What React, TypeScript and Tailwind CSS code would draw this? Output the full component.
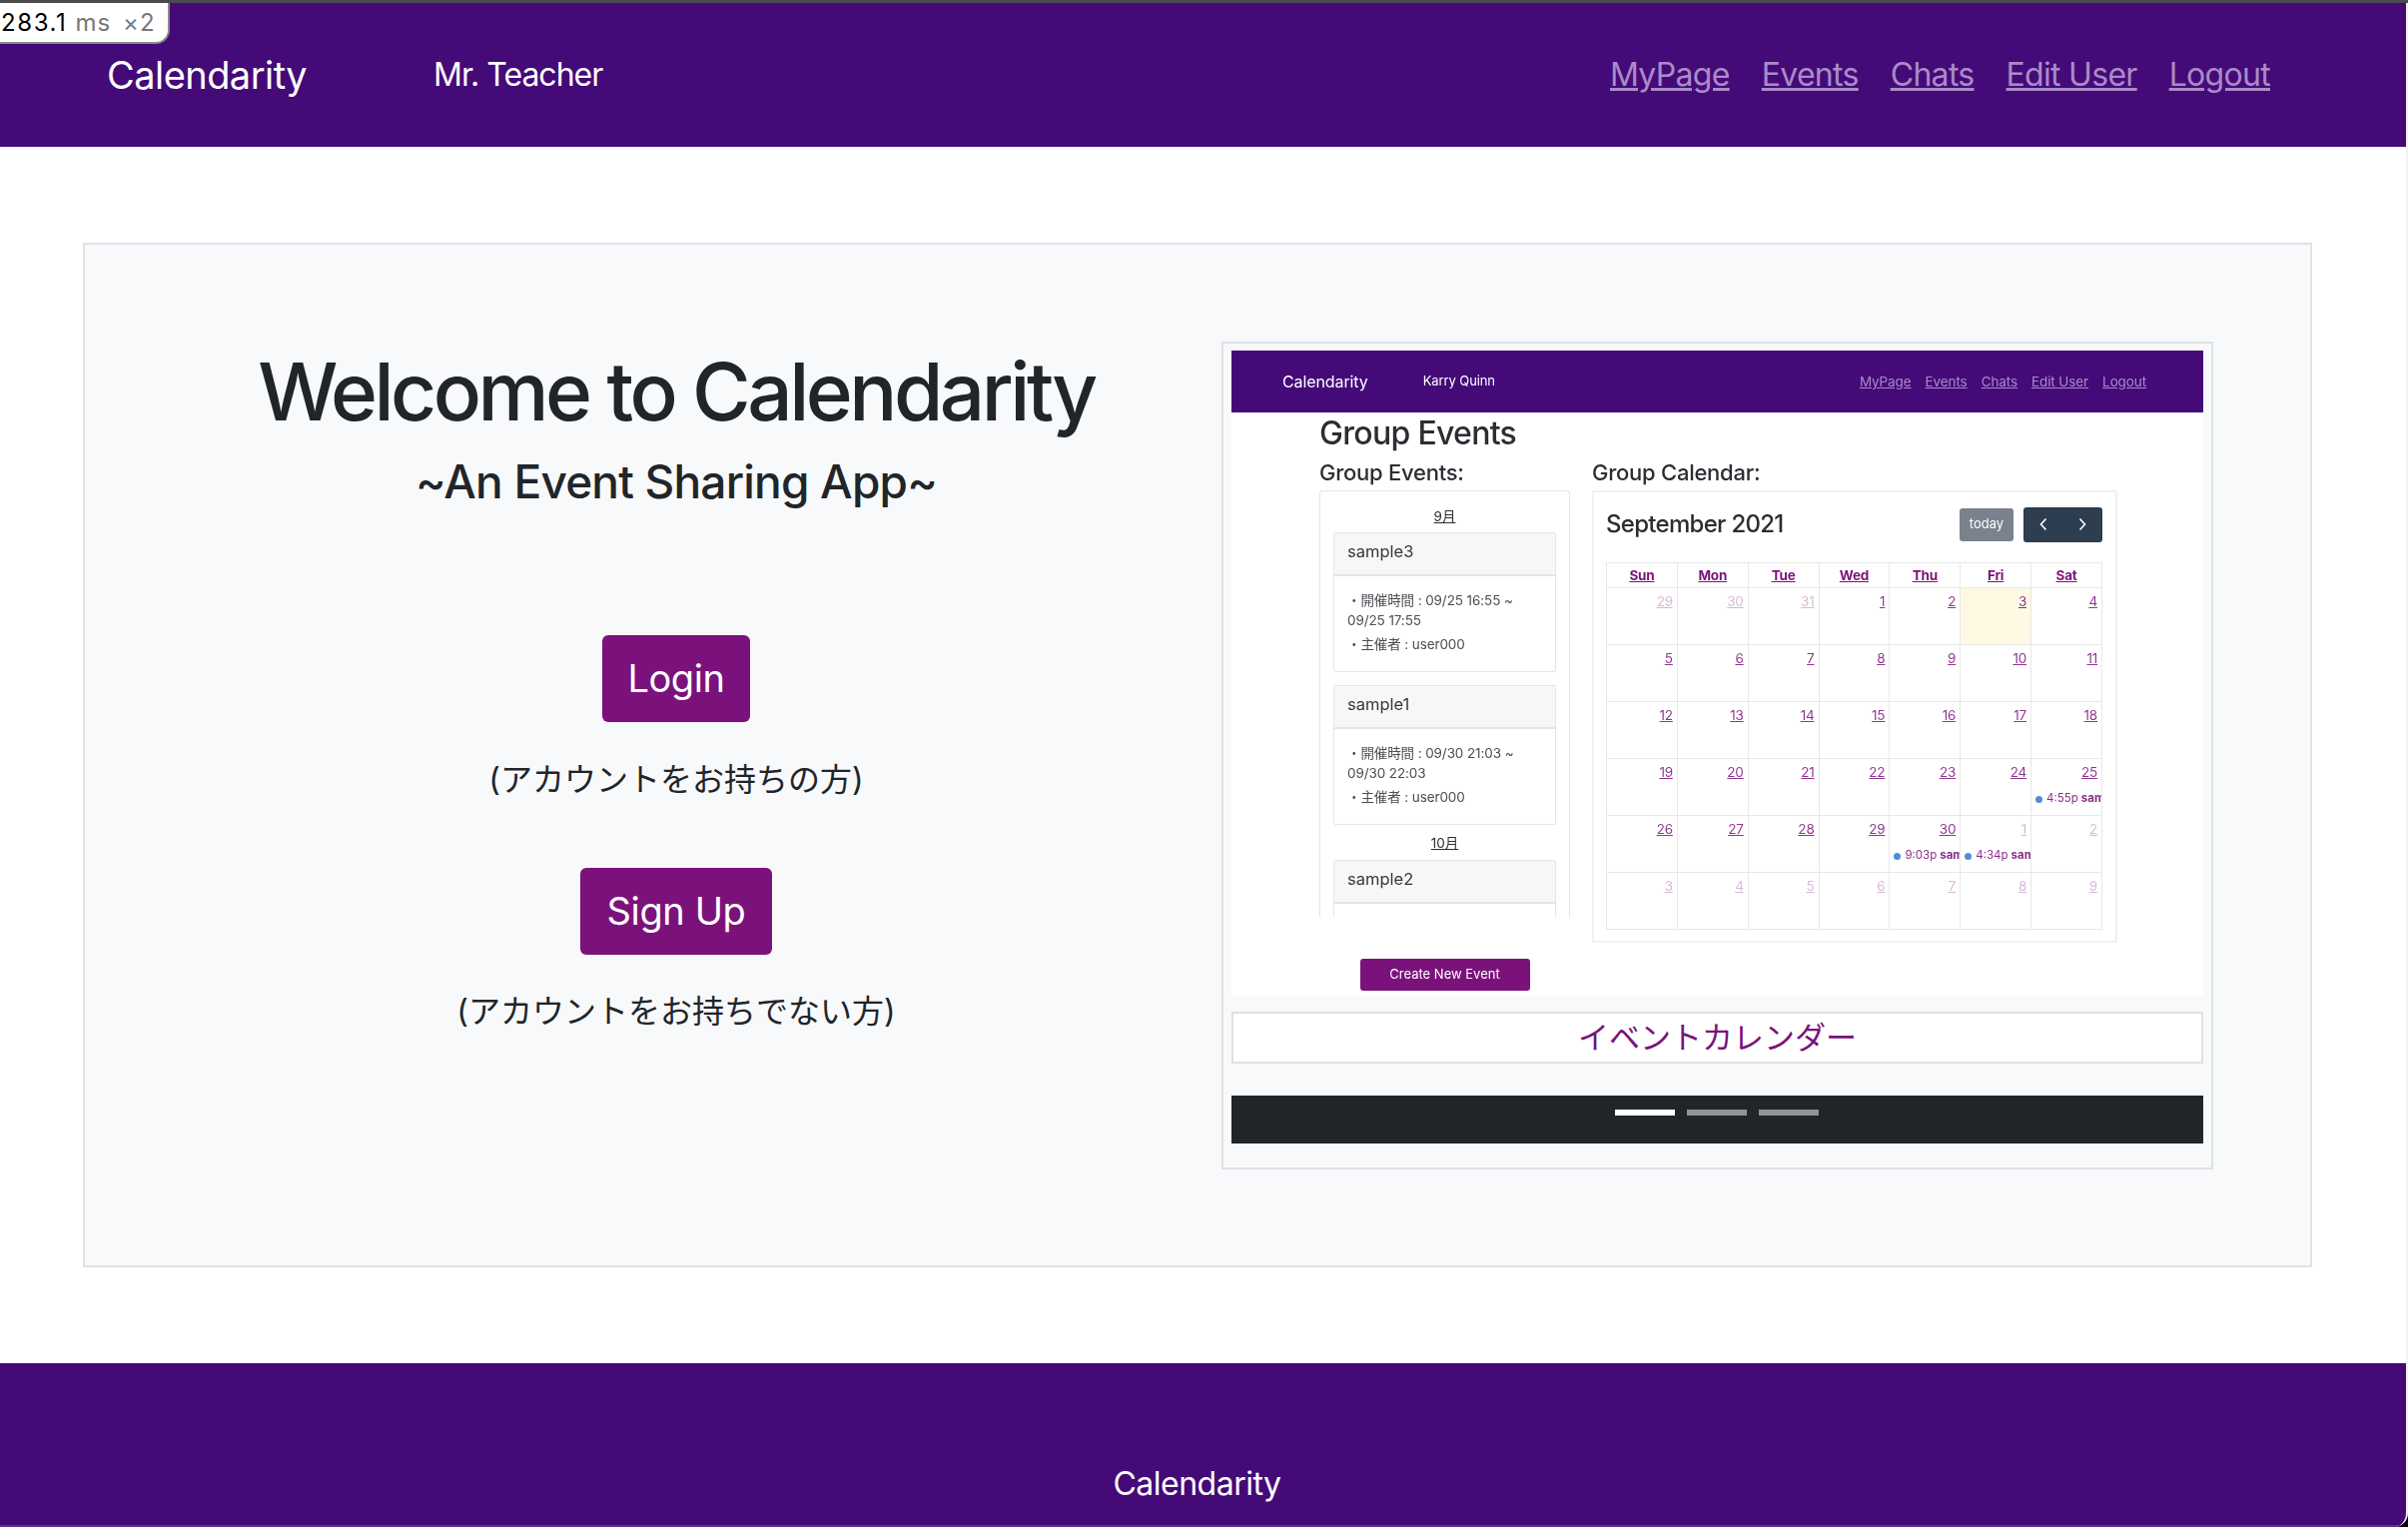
const days = [
  [29, 30, 31, 1, 2, 3, 4],
  [5, 6, 7, 8, 9, 10, 11],
  [12, 13, 14, 15, 16, 17, 18],
  [19, 20, 21, 22, 23, 24, 25],
  [26, 27, 28, 29, 30, 1, 2],
  [3, 4, 5, 6, 7, 8, 9],
];

const weekdays = ['Sun', 'Mon', 'Tue', 'Wed', 'Thu', 'Fri', 'Sat'];

const eventsByCell: Record<string, string> = {
  '3-6': '4:55p',
  '4-4': '9:03p',
  '4-5': '4:34p',
};

function isOtherMonth(row: number, value: number) {
  return (row === 0 && value > 20) || (row >= 4 && value < 20);
}

function EventCard({ title, lines, organizer }: { title: string; lines: string[]; organizer: string }) {
  return (
    <div className="border border-[#e3e5e8] rounded-[2px]">
      <div className="h-[43px] bg-[#f7f7f7] border-b-2 border-[#e3e5e8] pl-[13px] pt-[6px] text-[16.5px] leading-[24px] text-[#33373a]">
        {title}
      </div>
      <div className="pl-[13px] pt-[14px] pb-[17px] text-[13.5px] tracking-[-0.1px] text-[#4a4e52]">
        {lines.map((line) => (
          <div key={line} className="leading-[20px]">{line}</div>
        ))}
        <div className="leading-[20px] mt-[4px]">{organizer}</div>
      </div>
    </div>
  );
}

function Calendar() {
  return (
    <table className="w-[497px] table-fixed border-collapse">
      <thead>
        <tr className="h-[25px]">
          {weekdays.map((day) => (
            <th key={day} className="border border-[#e8e8e8] p-0 text-[13.5px] font-bold tracking-[-0.2px] text-[#7b127b] underline">
              {day}
            </th>
          ))}
        </tr>
      </thead>
      <tbody>
        {days.map((week, row) => (
          <tr key={row} className="h-[57px]">
            {week.map((value, col) => {
              const event = eventsByCell[`${row}-${col}`];
              return (
                <td
                  key={col}
                  className={`border border-[#e8e8e8] p-0 align-top ${row === 0 && col === 5 ? 'bg-[#fdf9e3]' : ''}`}
                >
                  <div className={`text-right pr-[4px] pt-[3px] text-[13.5px] leading-[20px] tracking-[-0.2px] text-[#7b127b] underline ${isOtherMonth(row, value) ? 'opacity-30' : 'opacity-85'}`}>
                    {value}
                  </div>
                  {event && (
                    <div className="flex items-center h-[16px] mt-[9px] pl-[4px] pr-[2px] overflow-hidden whitespace-nowrap text-[11.5px] text-[#7b127b] opacity-90">
                      <span className="w-[7px] h-[7px] rounded-full bg-[#3f80d8] mr-[4px] shrink-0" />
                      <span className="mr-[3px]">{event}</span>
                      <span className="font-bold">sample</span>
                    </div>
                  )}
                </td>
              );
            })}
          </tr>
        ))}
      </tbody>
    </table>
  );
}

function EventScreenshot() {
  return (
    <div className="h-[646px] bg-white blur-[0.4px] overflow-hidden">
      <div className="h-[62px] bg-[#440a78] flex items-center pl-[51px] pr-[57px] text-white">
        <span className="text-[16px] tracking-[-0.1px]">Calendarity</span>
        <span className="text-[13px] ml-[55px] tracking-[-0.1px]">Karry Quinn</span>
        <div className="ml-auto flex gap-[14px] text-[13.5px] tracking-[-0.1px] text-[#a98bc8] underline">
          <span>MyPage</span>
          <span>Events</span>
          <span>Chats</span>
          <span>Edit User</span>
          <span>Logout</span>
        </div>
      </div>
      <div className="pl-[88px] text-[#2a2e32]">
        <h2 className="text-[32px] leading-[42px] font-medium tracking-[-0.7px]">Group Events</h2>
        <div className="flex gap-[22px] mt-[3px]">
          <div className="w-[251px]">
            <div className="text-[22px] leading-[30px] mb-[3px] font-medium tracking-[-0.25px]">Group Events:</div>
            <div className="h-[427px] overflow-hidden border-x border-t border-[#e3e5e8] rounded-t-[3px] px-[13px]">
              <div className="text-center text-[13.5px] underline h-[41px] leading-[50px]">9月</div>
              <EventCard
                title="sample3"
                lines={['・開催時間 : 09/25 16:55 ~', '09/25 17:55']}
                organizer="・主催者 : user000"
              />
              <div className="h-[13px]" />
              <EventCard
                title="sample1"
                lines={['・開催時間 : 09/30 21:03 ~', '09/30 22:03']}
                organizer="・主催者 : user000"
              />
              <div className="text-center text-[13.5px] underline h-[35px] leading-[37px]">10月</div>
              <EventCard title="sample2" lines={[]} organizer="" />
            </div>
            <button className="block mx-auto mt-[42px] w-[170px] h-[32px] bg-[#7b127b] rounded-[3px] text-white text-[13px]">
              Create New Event
            </button>
          </div>
          <div className="w-[526px]">
            <div className="text-[22px] leading-[30px] mb-[3px] font-medium tracking-[-0.25px]">Group Calendar:</div>
            <div className="h-[453px] border-2 border-[#f1f1f1] pl-[12px] pt-[14px]">
              <div className="flex items-center w-[497px] h-[36px] mb-[20px]">
                <span className="text-[24px] font-medium tracking-[-0.7px] text-[#2a2e32]">September 2021</span>
                <span className="ml-auto w-[54px] h-[33px] rounded-[3px] bg-[#7a828d] text-white text-[13px] flex items-center justify-center">
                  today
                </span>
                <span className="ml-[10px] w-[79px] h-[35px] rounded-[3px] bg-[#2c3e50] text-white flex items-center justify-around">
                  <svg width="10" height="14" viewBox="0 0 10 14" fill="none" stroke="currentColor" strokeWidth="1.6">
                    <path d="M7.5 1.5 2.5 7l5 5.5" />
                  </svg>
                  <svg width="10" height="14" viewBox="0 0 10 14" fill="none" stroke="currentColor" strokeWidth="1.6">
                    <path d="M2.5 1.5 7.5 7l-5 5.5" />
                  </svg>
                </span>
              </div>
              <Calendar />
            </div>
          </div>
        </div>
      </div>
    </div>
  );
}

function Carousel() {
  return (
    <div className="mt-[97px] mr-[97px] w-[993px] h-[829px] shrink-0 border-2 border-[#dee2e6] px-[8px] pt-[7px]">
      <EventScreenshot />
      <div className="mt-[16px] h-[52px] border-2 border-[#dee2e6] bg-white flex items-center justify-center text-[31px] text-[#7b127b]">
        イベントカレンダー
      </div>
      <div className="mt-[32px] h-[48px] bg-[#212529] flex justify-center gap-[12px] pt-[14px] pr-[1px]">
        <span className="w-[60px] h-[6px] bg-white" />
        <span className="w-[60px] h-[6px] bg-[#919396]" />
        <span className="w-[60px] h-[6px] bg-[#919396]" />
      </div>
    </div>
  );
}

function Welcome() {
  return (
    <div className="flex-1 pl-[46px] flex flex-col items-center text-[#212529]">
      <h1 className="mt-[99px] text-[80px] leading-[96px] font-medium tracking-[-3.5px] whitespace-nowrap">Welcome to Calendarity</h1>
      <p className="mt-[12px] text-[46px] leading-[60px] font-medium tracking-[-0.8px]">~An Event Sharing App~</p>
      <button className="mt-[124px] w-[148px] h-[87px] rounded-[6px] bg-[#7b127b] text-white text-[38px] tracking-[-0.4px]">Login</button>
      <p className="mt-[35px] text-[32px] leading-[46px]">(アカウントをお持ちの方)</p>
      <button className="mt-[65px] w-[192px] h-[87px] rounded-[6px] bg-[#7b127b] text-white text-[38px] tracking-[-0.4px]">Sign Up</button>
      <p className="mt-[34px] text-[32px] leading-[46px]">(アカウントをお持ちでない方)</p>
    </div>
  );
}

export default function App() {
  return (
    <div className="w-[2411px] h-[1529px] bg-black overflow-hidden font-['Inter','Noto_Sans_CJK_JP',sans-serif] relative">
      <div className="h-[3px] bg-[#4b4b4b]" />
      <div className="w-full h-[1526px] flex flex-col bg-white rounded-br-[14px] overflow-hidden border-r-2 border-[#f4f4f4]">
        {/* Header */}
        <header className="h-[144px] bg-[#440a78] flex items-center pl-[107px] pr-[136px] text-white shrink-0">
          <span className="text-[38px] tracking-[-0.55px]">Calendarity</span>
          <span className="ml-[127px] text-[32px] tracking-[-1px]">Mr. Teacher</span>
          <nav className="ml-auto flex gap-[32px] text-[32px] tracking-[-0.7px] text-[#a98bc8] underline">
            <span>MyPage</span>
            <span>Events</span>
            <span>Chats</span>
            <span>Edit User</span>
            <span>Logout</span>
          </nav>
        </header>

        {/* Main */}
        <main className="flex-1 pt-[96px] px-[83px]">
          <div className="h-[1026px] w-[2232px] border-2 border-[#dee2e6] bg-[#f8f9fa] flex">
            <Welcome />
            <Carousel />
          </div>
        </main>

        {/* Footer */}
        <footer className="h-[164px] bg-[#440a78] border-b-2 border-[#5f2f8f] flex justify-center pt-[97px] pr-[12px] text-white text-[32px] tracking-[-0.5px] shrink-0">
          Calendarity
        </footer>
      </div>

      {/* Frame time badge */}
      <div className="absolute left-0 top-[3px] w-[170px] h-[41px] bg-white border-r-2 border-b-2 border-[#8a8a8a] rounded-br-[14px] flex items-center pl-[1px] text-[24px] whitespace-nowrap">
        <span className="text-black tracking-[1.6px]">283.1</span>
        <span className="text-[#777] ml-[8px] tracking-[1px]">ms</span>
        <span className="text-[#777] ml-[12px] tracking-[1px]">×2</span>
      </div>
    </div>
  );
}
